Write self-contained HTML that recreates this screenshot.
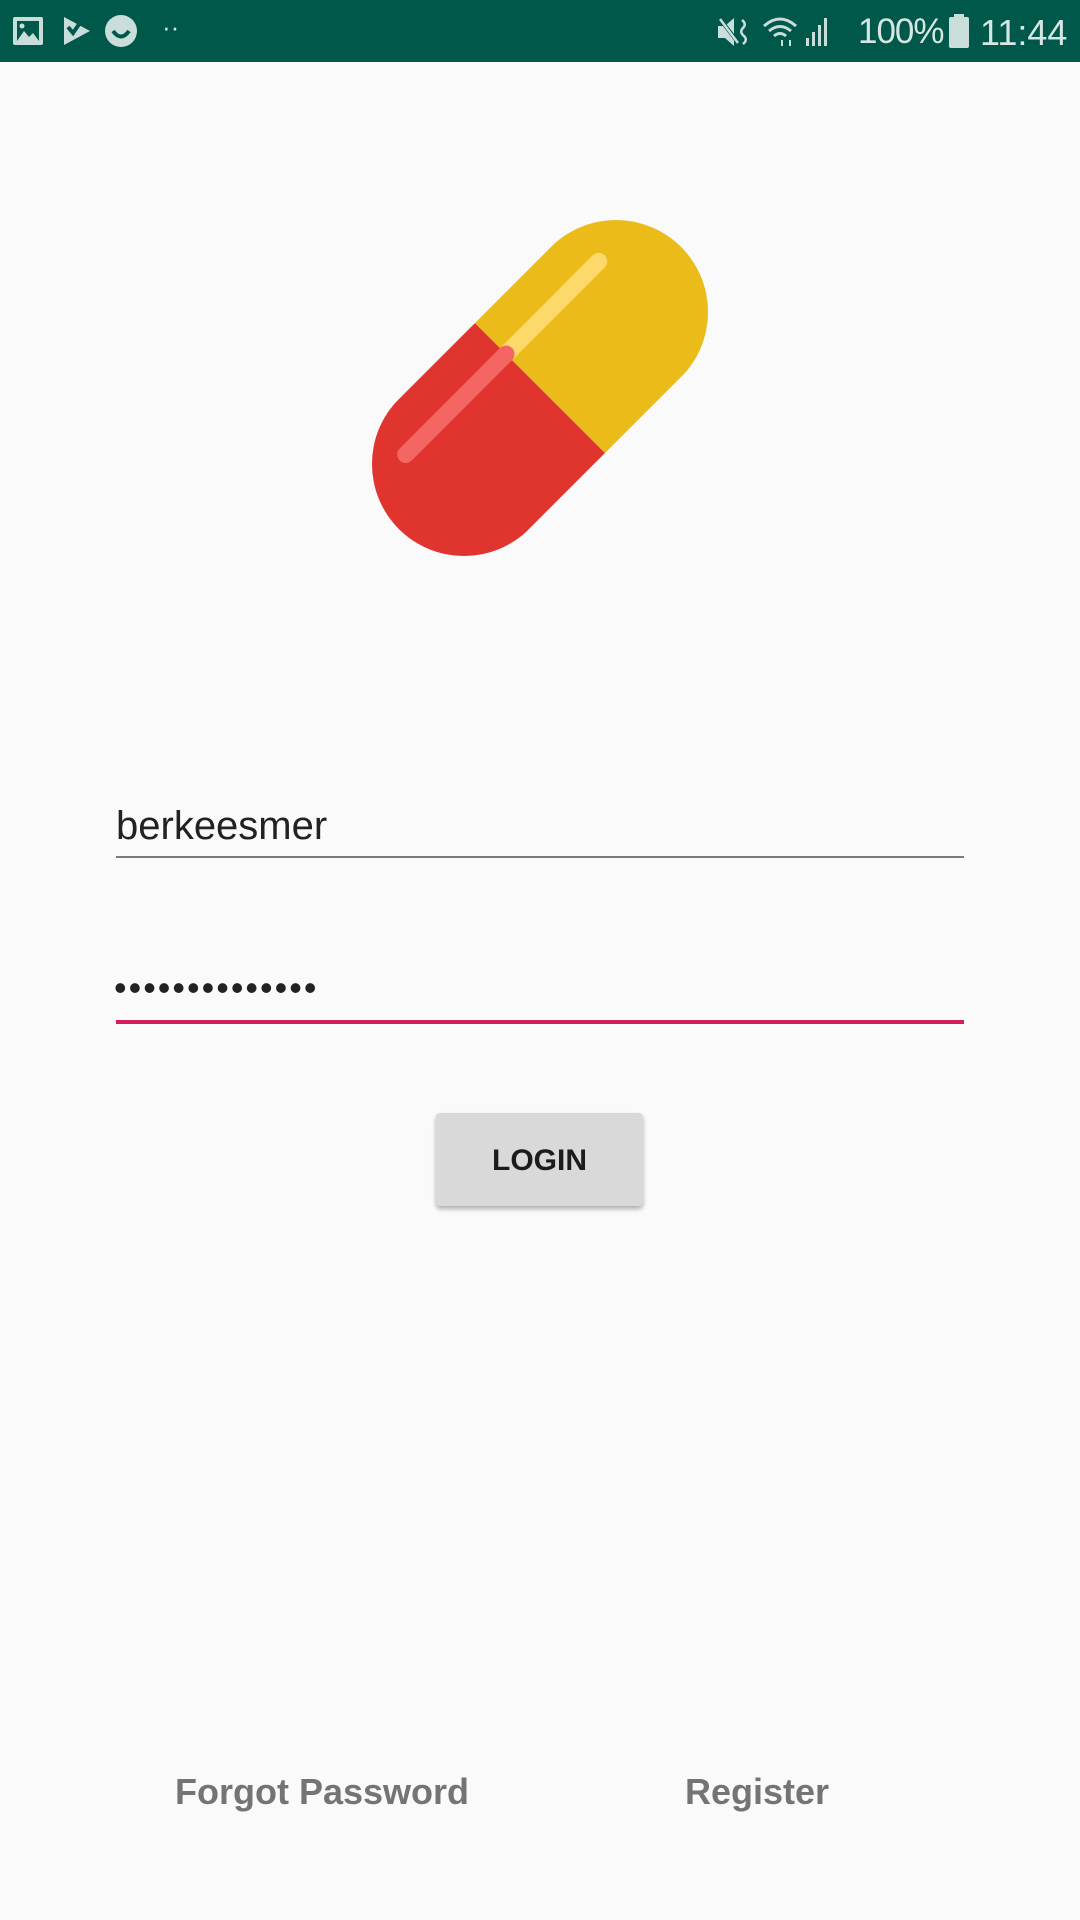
<!DOCTYPE html>
<html><head><meta charset="utf-8"><style>
body{margin:0;width:1080px;height:1920px;background:#fafafa;position:relative;overflow:hidden;font-family:"Liberation Sans",sans-serif}
.sb{position:absolute;left:0;top:0;width:1080px;height:62px;background:#00584b;color:#d6e6e2}
.abs{position:absolute}
</style></head><body>
<div class="sb">
<svg class="abs" style="left:12px;top:16px" width="32" height="30" viewBox="0 0 32 30"><rect x="1" y="1" width="30" height="28" rx="2" fill="#c9dedb"/><rect x="5" y="5" width="22" height="20" fill="#00584b"/><path d="M5 25 L12 15 L17 21 L21 17 L27 25Z" fill="#c9dedb"/><circle cx="10" cy="10" r="2.5" fill="#c9dedb"/></svg>
<svg class="abs" style="left:62px;top:15px" width="30" height="32" viewBox="0 0 30 32"><path d="M2 2 L28 16 L2 30Z" fill="#c9dedb"/><path d="M6 12 L11 18 L20 5" stroke="#00584b" stroke-width="4" fill="none"/></svg>
<svg class="abs" style="left:104px;top:14px" width="34" height="34" viewBox="0 0 34 34"><circle cx="17" cy="17" r="16" fill="#c9dedb"/><path d="M9 17 Q17 28 25 17" stroke="#00584b" stroke-width="4" fill="none"/></svg>
<div class="abs" style="left:162px;top:12px;font-size:26px">··</div>
<svg class="abs" style="left:716px;top:16px" width="36" height="32" viewBox="0 0 36 32"><path d="M2 10 H9 L18 2 V30 L9 22 H2Z" fill="#c9dedb"/><path d="M4 3 L24 29" stroke="#00584b" stroke-width="4"/><path d="M4 3 L22 27" stroke="#c9dedb" stroke-width="2.5"/><path d="M26 4 Q31 8 27 12 Q23 16 28 20 Q32 24 27 28" stroke="#c9dedb" stroke-width="2.5" fill="none"/></svg>
<svg class="abs" style="left:762px;top:16px" width="70" height="32" viewBox="0 0 70 32"><path d="M2 10 Q18 -4 34 10 M7 15 Q18 6 29 15 M12 20 Q18 15 24 20" stroke="#c9dedb" stroke-width="3" fill="none"/><path d="M20 24 v6 M28 24 v6" stroke="#c9dedb" stroke-width="2"/><rect x="44" y="22" width="3" height="8" fill="#c9dedb"/><rect x="50" y="16" width="3" height="14" fill="#c9dedb"/><rect x="56" y="9" width="3" height="21" fill="#c9dedb"/><rect x="62" y="2" width="3" height="28" fill="#c9dedb"/></svg>
<div class="abs" style="left:858px;top:12px;font-size:35px;letter-spacing:-1px;color:#d6e6e2">100%</div>
<svg class="abs" style="left:948px;top:14px" width="22" height="34"><rect x="6" y="0" width="10" height="4" fill="#c9dedb"/><rect x="1" y="3" width="20" height="31" rx="2" fill="#c9dedb"/></svg>
<div class="abs" style="left:980px;top:12px;font-size:36px;color:#d6e6e2">11:44</div>
</div>
<svg class="abs" style="left:0;top:0" width="1080" height="700">
<g transform="translate(540,388) rotate(-45)">
<clipPath id="c"><rect x="-199.5" y="-92" width="399" height="184" rx="92"/></clipPath>
<g clip-path="url(#c)">
<rect x="-200" y="-92" width="200" height="184" fill="#e0342f"/>
<rect x="0" y="-92" width="200" height="184" fill="#ebbb19"/>
</g>
<line x1="0" y1="-48" x2="131" y2="-48" stroke="#fdd86a" stroke-width="17" stroke-linecap="round"/>
<line x1="-142" y1="-48" x2="0" y2="-48" stroke="#f36663" stroke-width="17" stroke-linecap="round"/>
</g>
</svg>
<div class="abs" style="left:116px;top:804px;font-size:40px;color:#222">berkeesmer</div>
<div class="abs" style="left:116px;top:856px;width:848px;height:2px;background:#7b7b7b"></div>
<div class="abs" style="left:114px;top:967px;font-size:36px;color:#222;letter-spacing:2px">••••••••••••••</div>
<div class="abs" style="left:116px;top:1020px;width:848px;height:4px;background:#d21e5b"></div>
<div class="abs" style="left:436px;top:1113px;width:207px;height:93px;background:#d8d9d8;border-radius:4px;box-shadow:0 3px 5px rgba(0,0,0,0.3);text-align:center;line-height:96px;font-size:30px;font-weight:bold;color:#1c1c1c">LOGIN</div>
<div class="abs" style="left:122px;top:1771px;width:400px;text-align:center;font-size:36px;font-weight:bold;color:#747474">Forgot Password</div>
<div class="abs" style="left:557px;top:1771px;width:400px;text-align:center;font-size:36px;font-weight:bold;color:#747474">Register</div>
</body></html>
